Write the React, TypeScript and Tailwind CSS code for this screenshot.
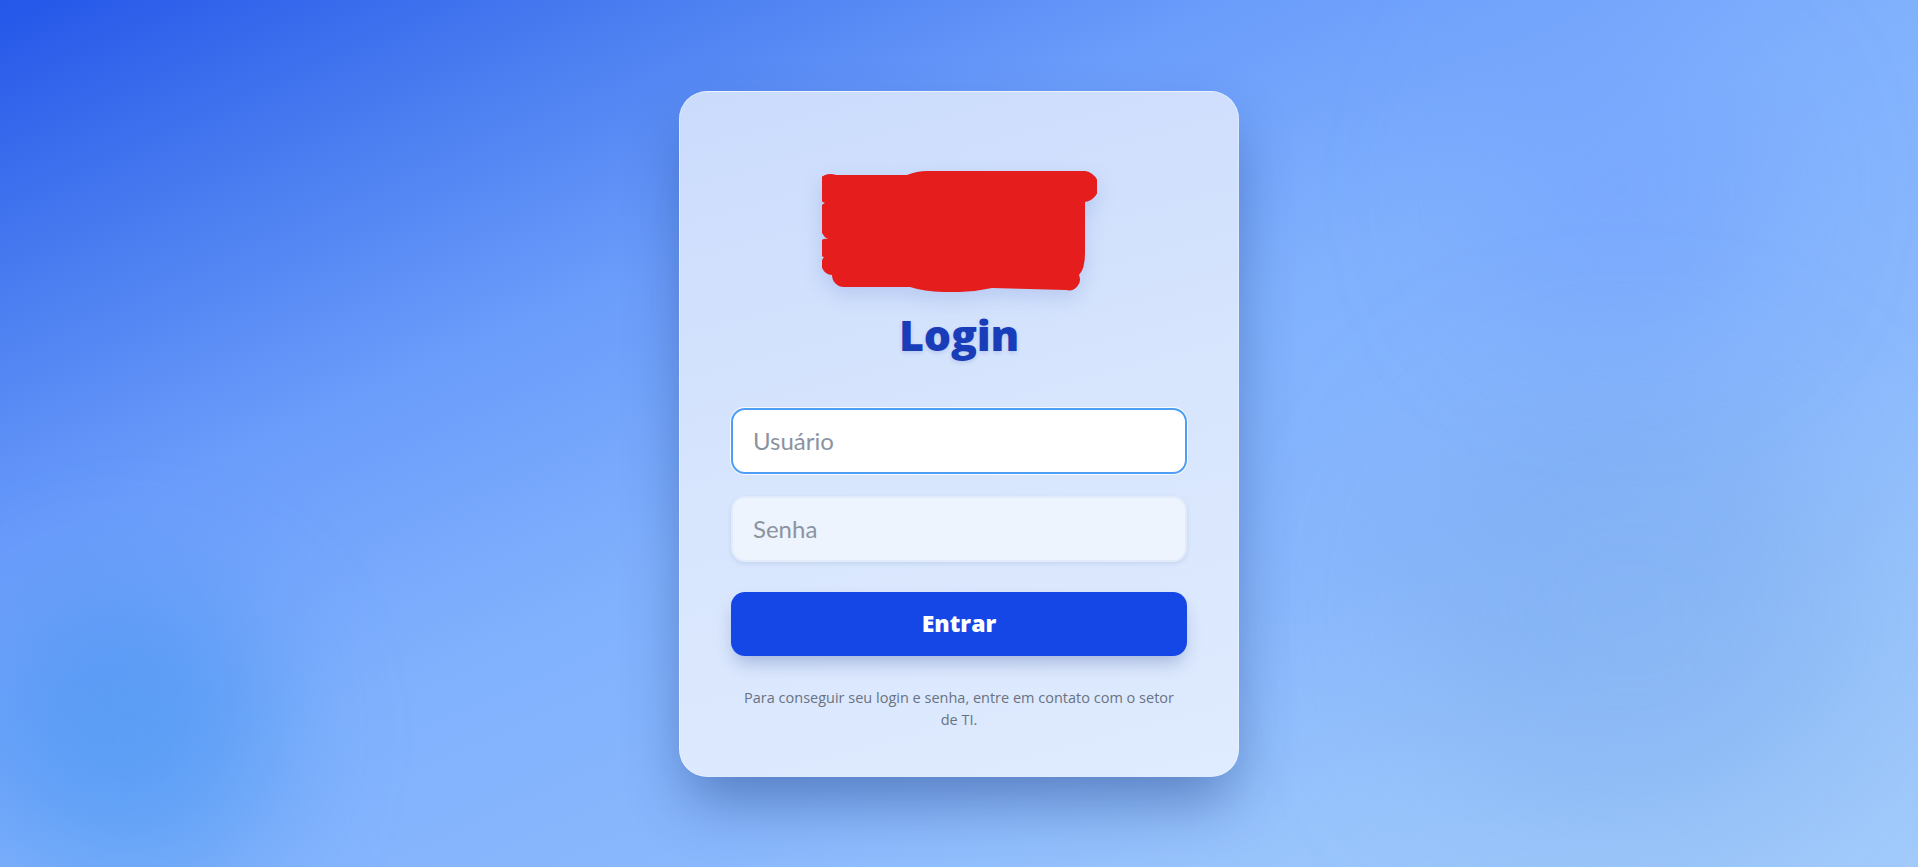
import React from "react";

function Logo() {
  return (
    <svg
      width="275"
      height="121"
      viewBox="0 0 275 121"
      className="drop-shadow-[0_8px_10px_rgba(30,64,175,0.15)]"
    >
      <path
        d="M 14 4 L 85 4 Q 95 0 105 0 L 259 0 A 15.5 15.5 0 0 1 263 31 L 263 82 Q 263 98 257 104 A 11 11 0 0 1 244 119 L 170 117 Q 150 121.5 129 121 Q 105 121.5 88 116 L 22 116 A 12 12 0 0 1 10 104 A 11 11 0 0 1 2 86 A 9 9 0 0 1 6 68 A 12 12 0 0 1 0 52 A 12 12 0 0 1 3 32 A 14 14 0 0 1 14 4 Z"
        fill="#e51d1d"
      />
    </svg>
  );
}

export default function App() {
  return (
    <div className="relative flex h-[867px] w-full items-center justify-center overflow-hidden bg-[linear-gradient(to_bottom_right,#2456e9_0%,#4a7df0_17%,#6a9cfb_32%,#80b1fd_50%,#8ab8fd_68%,#98c4fc_82%,#a2cbfb_100%)] font-['Lato','Noto_Sans',sans-serif]">
      {/* background blobs */}
      <div className="absolute left-[-20px] top-[585px] h-[300px] w-[300px] rounded-full bg-[#3d8ff0]/50 blur-[60px]" />
      <div className="absolute left-[1470px] top-[40px] h-[300px] w-[300px] rounded-full bg-[#6a98ff]/35 blur-[70px]" />
      <div className="absolute left-[1400px] top-[390px] h-[440px] w-[460px] rounded-full bg-[#6a9ce4]/30 blur-[80px]" />

      <div className="relative flex w-[560px] flex-col items-center rounded-[28px] border border-white/40 bg-[linear-gradient(165deg,#cbdbfc_0%,#d7e5fd_50%,#dfebfe_100%)] px-[51px] pb-[45px] pt-[79px] shadow-[0_30px_60px_-8px_rgba(20,50,120,0.45)]">
        <Logo />
        <h1 className="mt-[19px] font-['Open_Sans','Noto_Sans',sans-serif] text-[43px] font-extrabold leading-[48px] tracking-[-0.3px] text-blue-800 [text-shadow:0_2px_4px_rgba(30,60,170,0.15)]">
          Login
        </h1>

        <div className="mt-[49px] flex w-full flex-col">
          <input
            type="text"
            placeholder="Usuário"
            className="h-[66px] w-full rounded-[14px] border-2 border-[#4e9ef6] bg-white px-5 text-[24px] text-gray-800 outline-none ring-1 ring-white/80 placeholder:text-[#8b93a1]"
          />
          <input
            type="password"
            placeholder="Senha"
            className="mt-[22px] h-[66px] w-full rounded-[14px] border-2 border-[#e2ebfa] bg-[#edf4fe] px-5 text-[24px] text-gray-800 shadow-[0_2px_4px_rgba(60,90,150,0.12)] outline-none placeholder:text-[#8b93a1]"
          />
          <button
            type="button"
            className="mt-[30px] h-[64px] w-full rounded-[14px] bg-blue-700 font-['Open_Sans','Noto_Sans',sans-serif] text-[23px] font-extrabold text-white shadow-[0_10px_18px_-4px_rgba(30,60,140,0.3)]"
          >
            Entrar
          </button>
        </div>

        <p className="mt-[31px] text-center font-['Open_Sans','Noto_Sans',sans-serif] text-[14.5px] leading-[22px] text-gray-500">
          Para conseguir seu login e senha, entre em contato com o setor
          <br />
          de TI.
        </p>
      </div>
    </div>
  );
}
